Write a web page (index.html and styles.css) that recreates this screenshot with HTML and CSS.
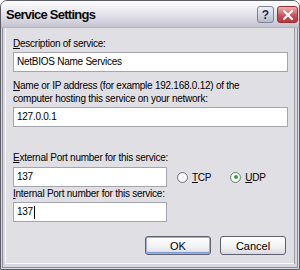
FILE: index.html
```html
<!DOCTYPE html>
<html>
<head>
<meta charset="utf-8">
<link rel="stylesheet" href="styles.css">
</head>
<body>
<div class="window">
  <div class="titlebar">
    <span class="title">Service Settings</span>
    <span class="tb-btn help">?</span>
    <span class="tb-btn close">
      <svg width="12" height="12" viewBox="0 0 12 12"><path d="M2 2 L10 10 M10 2 L2 10" stroke="#fff" stroke-width="2.2" stroke-linecap="round"/></svg>
    </span>
  </div>
  <div class="client">
    <div class="label l1"><u>D</u>escription of service:</div>
    <div class="input wide">NetBIOS Name Services</div>
    <div class="label l2"><u>N</u>ame or IP address (for example 192.168.0.12) of the<br>computer hosting this service on your network:</div>
    <div class="input wide">127.0.0.1</div>
    <div class="label l3"><u>E</u>xternal Port number for this service:</div>
    <div class="row">
      <div class="input narrow">137</div>
      <label class="radio"><span class="dot"></span><span><u>T</u>CP</span></label>
      <label class="radio checked"><span class="dot"></span><span><u>U</u>DP</span></label>
    </div>
    <div class="label l4"><u>I</u>nternal Port number for this service:</div>
    <div class="input narrow">137<span class="caret"></span></div>
    <div class="buttons">
      <button class="btn default">OK</button>
      <button class="btn">Cancel</button>
    </div>
  </div>
</div>
</body>
</html>
```
FILE: styles.css
```css
html, body { margin: 0; padding: 0; background: #fff; }
.window {
  width: 300px; height: 270px; box-sizing: border-box;
  border: 1px solid #5d5d68;
  border-radius: 7px 7px 0 0;
  background: #e0dfe3;
  display: flex; flex-direction: column;
  font-family: "Liberation Sans", Arial, sans-serif;
  font-size: 10px; letter-spacing: -0.25px; color: #000;
  overflow: hidden;
}
.titlebar {
  height: 26px; flex: none;
  display: flex; align-items: center;
  padding: 0 1px 0 5px;
  background: linear-gradient(#fdfdfe 0%, #ecebf0 35%, #d9d8e1 70%, #c3c2cf 100%);
  border-bottom: 1px solid #b5b4c2;
}
.title {
  font-family: "Liberation Sans", Arial, sans-serif;
  font-weight: bold; font-size: 13px; letter-spacing: -0.75px; color: #0a0a0a;
  flex: 1;
}
.tb-btn {
  height: 17px; box-sizing: border-box;
  border-radius: 3px;
  display: flex; align-items: center; justify-content: center;
  margin-top: 1px;
}
.help {
  width: 17px; margin-right: 3px;
  background: linear-gradient(#eef0f6, #b7bccb);
  border: 1px solid #7d8498;
  font-weight: bold; font-size: 12px; letter-spacing: 0; color: #1e2a4a;
}
.close {
  width: 21px;
  background: linear-gradient(#f0b0b4, #cc4c55 60%, #b83840);
  border: 1px solid #963039;
}
.client {
  flex: 1;
  border-style: solid; border-width: 0 4px 5px 4px;
  border-color: #d8d7e0;
  box-shadow: inset 1px 0 #fbfbfd, inset -1px 0 #9a99a6, inset 0 -1px #fbfbfd;
  padding: 8px 9px 0 8px;
  display: flex; flex-direction: column; align-items: flex-start;
  position: relative;
}
.client::before {
  content: ""; position: absolute; top: 0;
  border: solid #8d8c99; border-width: 0 1px 1px 1px; pointer-events: none;
  left: -3px; right: -3px; bottom: -4px;
}
.label { line-height: 13px; white-space: nowrap; }
.l1 { margin-top: 1px; }
.l2 { margin-top: 7px; }
.l3 { margin-top: 24px; }
.l4 { margin-top: 0; }
.input {
  margin-top: 2px;
  height: 20px; box-sizing: border-box;
  border: 1px solid #a4a4ac;
  background: #fff;
  padding: 0 3px;
  line-height: 18px;
  display: flex; align-items: center;
}
.wide { width: 275px; }
.narrow { width: 154px; }
.row { display: flex; align-items: center; margin-top: 3px; }
.row .input { margin-top: 0; }
.radio { display: flex; align-items: center; gap: 4px; margin-left: 10px; }
.radio + .radio { margin-left: 19px; }
.dot {
  width: 11px; height: 11px; box-sizing: border-box;
  border-radius: 50%;
  border: 1px solid #6f7486;
  background: radial-gradient(circle, #ffffff 40%, #e6e6ec);
  display: flex; align-items: center; justify-content: center;
}
.checked .dot { border-color: #5f8a6a; }
.checked .dot::after {
  content: ""; width: 4px; height: 4px; border-radius: 50%;
  background: #3f9a3a;
}
.caret { display: inline-block; width: 1px; height: 13px; background: #000; margin-left: 1px; }
.buttons {
  align-self: flex-end;
  display: flex; gap: 9px;
  margin-top: 14px; margin-right: 0;
}
.btn {
  width: 66px; height: 19px; box-sizing: border-box;
  font-family: "Liberation Sans", Arial, sans-serif; font-size: 11px; color: #000;
  border: 1px solid #5f5f6e; border-radius: 3px;
  background: linear-gradient(#ffffff, #f1f1f4 60%, #d8d8e0);
  padding: 0;
}
.btn.default {
  box-shadow: inset 0 0 0 1px #9cb3e0, inset 0 -1px 0 1px #7d9bd6;
}
```
